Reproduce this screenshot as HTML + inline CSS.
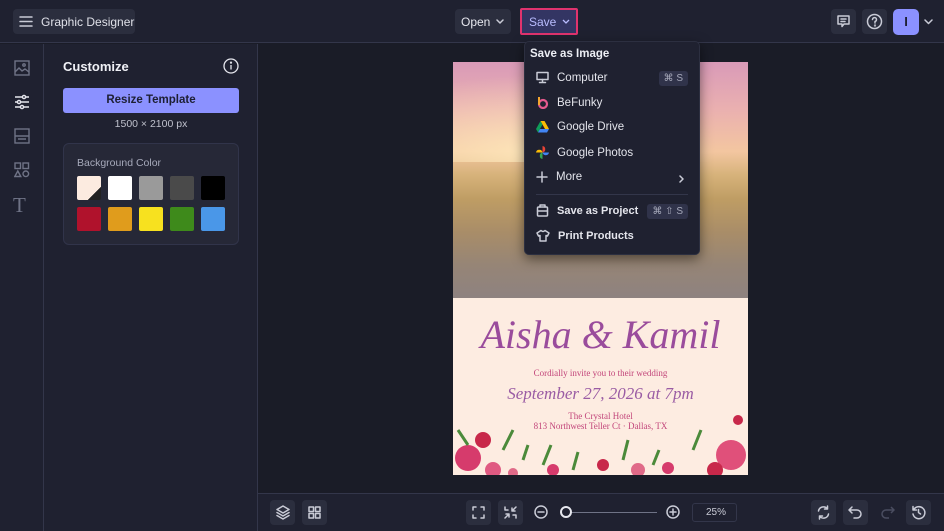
<!DOCTYPE html>
<html><head><meta charset="utf-8"><style>
*{box-sizing:border-box;margin:0;padding:0}
body{width:944px;height:531px;overflow:hidden;background:#1a1c27;font-family:"Liberation Sans",sans-serif;color:#e6e7ee;position:relative}
.abs{position:absolute}
.btn{position:absolute;background:#2b2e3e;border-radius:4px}
svg{display:block}
.ic{stroke:#c9cbd6;fill:none;stroke-width:1.5;stroke-linecap:round;stroke-linejoin:round}
.rail{stroke:#6f7386;fill:none;stroke-width:1.4}
.mi{position:absolute;left:12px;display:flex;align-items:center;font-size:11.5px;color:#e4e5ec}
.mi svg{margin-right:8px}
.kbd{position:absolute;right:12px;background:#30334a;color:#a7aabb;font-size:10px;padding:2px 5px;border-radius:3px}
</style></head><body>
<!-- top bar -->
<div class="abs" style="left:0;top:0;width:944px;height:43px;background:#1f2130;border-bottom:1px solid #33364a"></div>
<div class="btn" style="left:13px;top:9px;width:122px;height:25px"></div>
<svg class="abs ic" style="left:19px;top:15px" width="14" height="13"><path d="M1 2h12M1 6.5h12M1 11h12"/></svg>
<div class="abs" style="left:41px;top:15px;font-size:12px;color:#dfe0e8">Graphic Designer</div>
<div class="btn" style="left:455px;top:9px;width:56px;height:25px"></div>
<div class="abs" style="left:461px;top:15px;font-size:12px">Open</div>
<svg class="abs ic" style="left:496px;top:19px" width="8" height="5"><path d="M1 1l3 3 3-3"/></svg>
<div class="abs" style="left:520px;top:8px;width:58px;height:27px;background:#333563;border:2px solid #e0336e;border-radius:2px"></div>
<div class="abs" style="left:529px;top:15px;font-size:12px;color:#b9bcff">Save</div>
<svg class="abs" style="left:562px;top:19px" width="8" height="5"><path d="M1 1l3 3 3-3" stroke="#b9bcff" fill="none" stroke-width="1.3"/></svg>
<div class="btn" style="left:831px;top:9px;width:25px;height:25px"></div>
<svg class="abs ic" style="left:836px;top:14px" width="15" height="15"><path d="M2 2h11v8H8l-2 2.5V10H2z M5 5h5M5 7.5h4"/></svg>
<div class="btn" style="left:862px;top:9px;width:25px;height:25px"></div>
<svg class="abs ic" style="left:866px;top:13px" width="17" height="17"><circle cx="8.5" cy="8.5" r="7"/><path d="M6.5 6.5a2 2 0 1 1 2.5 2v1.5"/><circle cx="9" cy="12.5" r=".4"/></svg>
<div class="abs" style="left:893px;top:9px;width:26px;height:26px;background:#8b91ff;border-radius:5px;color:#1d1f33;font-size:13px;text-align:center;line-height:26px;font-weight:bold">I</div>
<svg class="abs ic" style="left:924px;top:19px" width="9" height="6"><path d="M1 1l3.5 3.5L8 1"/></svg>
<!-- left rail -->
<div class="abs" style="left:0;top:44px;width:44px;height:487px;background:#1f2130;border-right:1px solid #33364a"></div>
<svg class="abs rail" style="left:14px;top:60px" width="16" height="16"><rect x="1" y="1" width="14" height="14"/><path d="M1 12l4-4 3 3 3-2 4 3"/><circle cx="10" cy="5" r="1.2"/></svg>
<svg class="abs" style="left:14px;top:94px" width="16" height="16" stroke="#e6e7ee" fill="none" stroke-width="1.4"><path d="M1 3h14M1 8h14M1 13h14"/><circle cx="10" cy="3" r="1.6" fill="#1f2130"/><circle cx="5" cy="8" r="1.6" fill="#1f2130"/><circle cx="8" cy="13" r="1.6" fill="#1f2130"/></svg>
<svg class="abs rail" style="left:14px;top:128px" width="16" height="16"><rect x="1" y="1" width="14" height="14"/><path d="M1 8h14M4 11h8"/></svg>
<svg class="abs rail" style="left:14px;top:162px" width="16" height="16"><rect x="1" y="1" width="5.5" height="5.5"/><rect x="9" y="1" width="5.5" height="5.5"/><path d="M3.8 9l3 5.5h-6z"/><circle cx="11.8" cy="11.8" r="2.8"/></svg>
<div class="abs" style="left:13px;top:193px;font-family:'Liberation Serif',serif;font-size:21px;color:#6f7386">T</div>
<!-- panel -->
<div class="abs" style="left:44px;top:44px;width:214px;height:487px;background:#1f2130;border-right:1px solid #33364a"></div>
<div class="abs" style="left:63px;top:59px;font-size:13px;font-weight:bold;color:#f0f1f6">Customize</div>
<svg class="abs" style="left:223px;top:58px" width="16" height="16" stroke="#e6e7ee" fill="none" stroke-width="1.3"><circle cx="8" cy="8" r="7"/><path d="M8 7v4.5"/><circle cx="8" cy="4.6" r=".5"/></svg>
<div class="abs" style="left:63px;top:88px;width:176px;height:25px;background:#8b91ff;border-radius:3px;text-align:center;line-height:25px;font-size:11.5px;color:#1d1f33;font-weight:bold">Resize Template</div>
<div class="abs" style="left:63px;top:118px;width:176px;text-align:center;font-size:10.5px;color:#bfc1cc">1500 × 2100 px</div>
<div class="abs" style="left:63px;top:143px;width:176px;height:102px;background:#262837;border:1px solid #31344a;border-radius:6px"></div>
<div class="abs" style="left:77px;top:157px;font-size:10.5px;color:#a7aabb">Background Color</div>
<div class="abs" style="left:77px;top:176px;width:24px;height:24px;background:linear-gradient(135deg,#fcebe0 0,#fcebe0 72%,#222 72%);border-radius:2px"></div>
<div class="abs" style="left:108px;top:176px;width:24px;height:24px;background:#fff;border-radius:2px"></div>
<div class="abs" style="left:139px;top:176px;width:24px;height:24px;background:#9a9a9a;border-radius:2px"></div>
<div class="abs" style="left:170px;top:176px;width:24px;height:24px;background:#4a4a4a;border-radius:2px"></div>
<div class="abs" style="left:201px;top:176px;width:24px;height:24px;background:#000;border-radius:2px"></div>
<div class="abs" style="left:77px;top:207px;width:24px;height:24px;background:#b0122c;border-radius:2px"></div>
<div class="abs" style="left:108px;top:207px;width:24px;height:24px;background:#e09c1c;border-radius:2px"></div>
<div class="abs" style="left:139px;top:207px;width:24px;height:24px;background:#f7e11f;border-radius:2px"></div>
<div class="abs" style="left:170px;top:207px;width:24px;height:24px;background:#3e8a1b;border-radius:2px"></div>
<div class="abs" style="left:201px;top:207px;width:24px;height:24px;background:#4a97e8;border-radius:2px"></div>
<!-- image -->
<div class="abs" style="left:453px;top:62px;width:295px;height:236px;background:linear-gradient(180deg,#d99ab8 0%,#eab0b0 20%,#f3c6a0 38%,#d6b27a 48%,#bf9d64 58%,#a98d68 72%,#968576 86%,#8e8280 100%)"></div>
<div class="abs" style="left:453px;top:62px;width:295px;height:100px;background:radial-gradient(ellipse at 25% 90%,rgba(255,235,190,.8),rgba(255,235,190,0) 60%)"></div>
<div class="abs" style="left:453px;top:298px;width:295px;height:177px;background:#fdece1"></div>
<div class="abs" style="left:453px;top:311px;width:295px;text-align:center;font-family:'Liberation Serif',serif;font-style:italic;font-size:40px;color:#9a4c9c">Aisha &amp; Kamil</div>
<div class="abs" style="left:453px;top:368px;width:295px;text-align:center;font-family:'Liberation Serif',serif;font-size:9px;color:#c2457a">Cordially invite you to their wedding</div>
<div class="abs" style="left:453px;top:384px;width:295px;text-align:center;font-family:'Liberation Serif',serif;font-style:italic;font-size:17px;color:#9a5ca4">September 27, 2026 at 7pm</div>
<div class="abs" style="left:453px;top:411px;width:295px;text-align:center;font-family:'Liberation Serif',serif;font-size:9px;color:#c2457a">The Crystal Hotel<br>813 Northwest Teller Ct · Dallas, TX</div>
<svg class="abs" style="left:453px;top:400px" width="295" height="75">
<circle cx="15" cy="58" r="13" fill="#d63b6c"/><circle cx="30" cy="40" r="8" fill="#c8284a"/><circle cx="40" cy="70" r="8" fill="#e05a82"/>
<path d="M5 30l10 15M50 50l10-20M70 60l5-15M90 65l8-20M120 70l5-18M170 60l5-20M200 65l6-15M240 50l8-20" stroke="#4b8a3a" stroke-width="3"/>
<circle cx="100" cy="70" r="6" fill="#d63b6c"/><circle cx="150" cy="65" r="6" fill="#c8284a"/><circle cx="185" cy="70" r="7" fill="#e06a88"/><circle cx="215" cy="68" r="6" fill="#d63b6c"/>
<circle cx="278" cy="55" r="15" fill="#e0507a"/><circle cx="262" cy="70" r="8" fill="#c8284a"/><circle cx="285" cy="20" r="5" fill="#c8284a"/><circle cx="60" cy="73" r="5" fill="#e06a88"/>
</svg>
<!-- dropdown -->
<div class="abs" style="left:524px;top:41px;width:176px;height:214px;background:#1f2130;border:1px solid #2c2f40;border-radius:5px;box-shadow:0 4px 12px rgba(0,0,0,.5)"></div>
<div class="abs" style="left:530px;top:48px;font-size:11.5px;font-weight:bold;color:#eceef4">Save as Image</div>
<div class="abs" style="left:524px;top:41px;width:176px;height:214px">
<div class="mi" style="top:30px"><svg class="ic" width="13" height="13"><rect x="1" y="1.5" width="11" height="7"/><path d="M6.5 8.5v2.5M3.5 11.5h6"/></svg>Computer</div>
<div class="kbd" style="top:30px">⌘ S</div>
<div class="mi" style="top:55px"><svg width="13" height="13"><circle cx="7" cy="8" r="4" fill="none" stroke="#e55a8e" stroke-width="2.2"/><path d="M3 1v8" stroke="#f4a52e" stroke-width="2"/></svg>BeFunky</div>
<div class="mi" style="top:80px"><svg width="13" height="12"><path d="M4.5 0h4l4.5 8h-4z" fill="#fbbc04"/><path d="M4.5 0L0 8l2 3.5L6.5 3.5z" fill="#0f9d58"/><path d="M2 11.5h9l2-3.5H4z" fill="#4285f4"/></svg>Google Drive</div>
<div class="mi" style="top:105px"><svg width="13" height="13"><path d="M6.5 6.5V0a3.3 3.3 0 0 1 0 6.5" fill="#ea4335"/><path d="M6.5 6.5H13a3.3 3.3 0 0 1-6.5 0" fill="#4285f4"/><path d="M6.5 6.5V13a3.3 3.3 0 0 1 0-6.5" fill="#34a853"/><path d="M6.5 6.5H0a3.3 3.3 0 0 1 6.5 0" fill="#fbbc04"/></svg>Google Photos</div>
<div class="mi" style="top:130px"><svg class="ic" width="12" height="12"><path d="M6 1v10M1 6h10"/></svg>More</div>
<svg class="abs ic" style="left:155px;top:134px" width="6" height="8"><path d="M1 1l3 3-3 3"/></svg>
<div class="abs" style="left:12px;top:153px;width:152px;height:1px;background:#33364a"></div>
<div class="mi" style="top:163px;font-weight:bold;font-size:11px"><svg class="ic" width="13" height="13"><rect x="1.5" y="3" width="10" height="9" rx="1"/><path d="M4 3V1h5v2M1.5 7h10"/></svg>Save as Project</div>
<div class="kbd" style="top:163px">⌘ ⇧ S</div>
<div class="mi" style="top:188px;font-weight:bold;font-size:11px"><svg class="ic" width="14" height="13"><path d="M5 1.5L1 4l1.5 3L4 6.5V12h6V6.5L11.5 7 13 4 9 1.5Q7 3.5 5 1.5z"/></svg>Print Products</div>
</div>
<!-- bottom bar -->
<div class="abs" style="left:258px;top:493px;width:686px;height:38px;background:#1f2130;border-top:1px solid #33364a"></div>
<div class="btn" style="left:270px;top:500px;width:25px;height:25px"></div>
<svg class="abs ic" style="left:276px;top:505px" width="14" height="15"><path d="M7 1l6 3.5-6 3.5-6-3.5z M1 7.5l6 3.5 6-3.5 M1 10.5l6 3.5 6-3.5"/></svg>
<div class="btn" style="left:302px;top:500px;width:25px;height:25px"></div>
<svg class="abs ic" style="left:308px;top:506px" width="13" height="13"><rect x="1" y="1" width="4.5" height="4.5"/><rect x="7.5" y="1" width="4.5" height="4.5"/><rect x="1" y="7.5" width="4.5" height="4.5"/><rect x="7.5" y="7.5" width="4.5" height="4.5"/></svg>
<div class="btn" style="left:466px;top:500px;width:25px;height:25px"></div>
<svg class="abs ic" style="left:472px;top:506px" width="13" height="13"><path d="M1 4V1h3M9 1h3v3M12 9v3H9M4 12H1V9"/></svg>
<div class="btn" style="left:498px;top:500px;width:25px;height:25px"></div>
<svg class="abs ic" style="left:504px;top:506px" width="13" height="13"><path d="M8 5l4-4M8 2v3h3M5 8l-4 4M2 8h3v3M1 1v3h3M12 12V9H9"/></svg>
<svg class="abs ic" style="left:534px;top:505px" width="14" height="14"><circle cx="7" cy="7" r="6"/><path d="M4 7h6"/></svg>
<div class="abs" style="left:566px;top:512px;width:91px;height:1px;background:#6f7386"></div>
<div class="abs" style="left:560px;top:506px;width:12px;height:12px;border:2px solid #e6e7ee;border-radius:50%;background:#1f2130"></div>
<svg class="abs ic" style="left:666px;top:505px" width="14" height="14"><circle cx="7" cy="7" r="6"/><path d="M4 7h6M7 4v6"/></svg>
<div class="abs" style="left:692px;top:503px;width:45px;height:19px;border:1px solid #33364a;border-radius:3px;font-size:10px;color:#c9cbd6;text-align:right;padding-right:10px;line-height:18px">25%</div>
<div class="btn" style="left:811px;top:500px;width:25px;height:25px"></div>
<svg class="abs ic" style="left:816px;top:505px" width="15" height="15"><path d="M2.5 6a5 5 0 0 1 9-2M12.5 9a5 5 0 0 1-9 2M11.5 1v3h-3M3.5 14v-3h3"/></svg>
<div class="btn" style="left:843px;top:500px;width:25px;height:25px"></div>
<svg class="abs ic" style="left:848px;top:506px" width="15" height="13"><path d="M4 1L1 4l3 3M1 4h8a4 4 0 0 1 0 8H6"/></svg>
<svg class="abs" style="left:880px;top:506px" width="15" height="13" stroke="#4a4d60" fill="none" stroke-width="1.5"><path d="M11 1l3 3-3 3M14 4H6a4 4 0 0 0 0 8h3"/></svg>
<div class="btn" style="left:906px;top:500px;width:25px;height:25px"></div>
<svg class="abs ic" style="left:911px;top:505px" width="15" height="15"><path d="M2.5 5a6 6 0 1 1-.5 4M2 1.5v3.5h3.5M7.5 4.5v3l2 1.5"/></svg>
</body></html>
